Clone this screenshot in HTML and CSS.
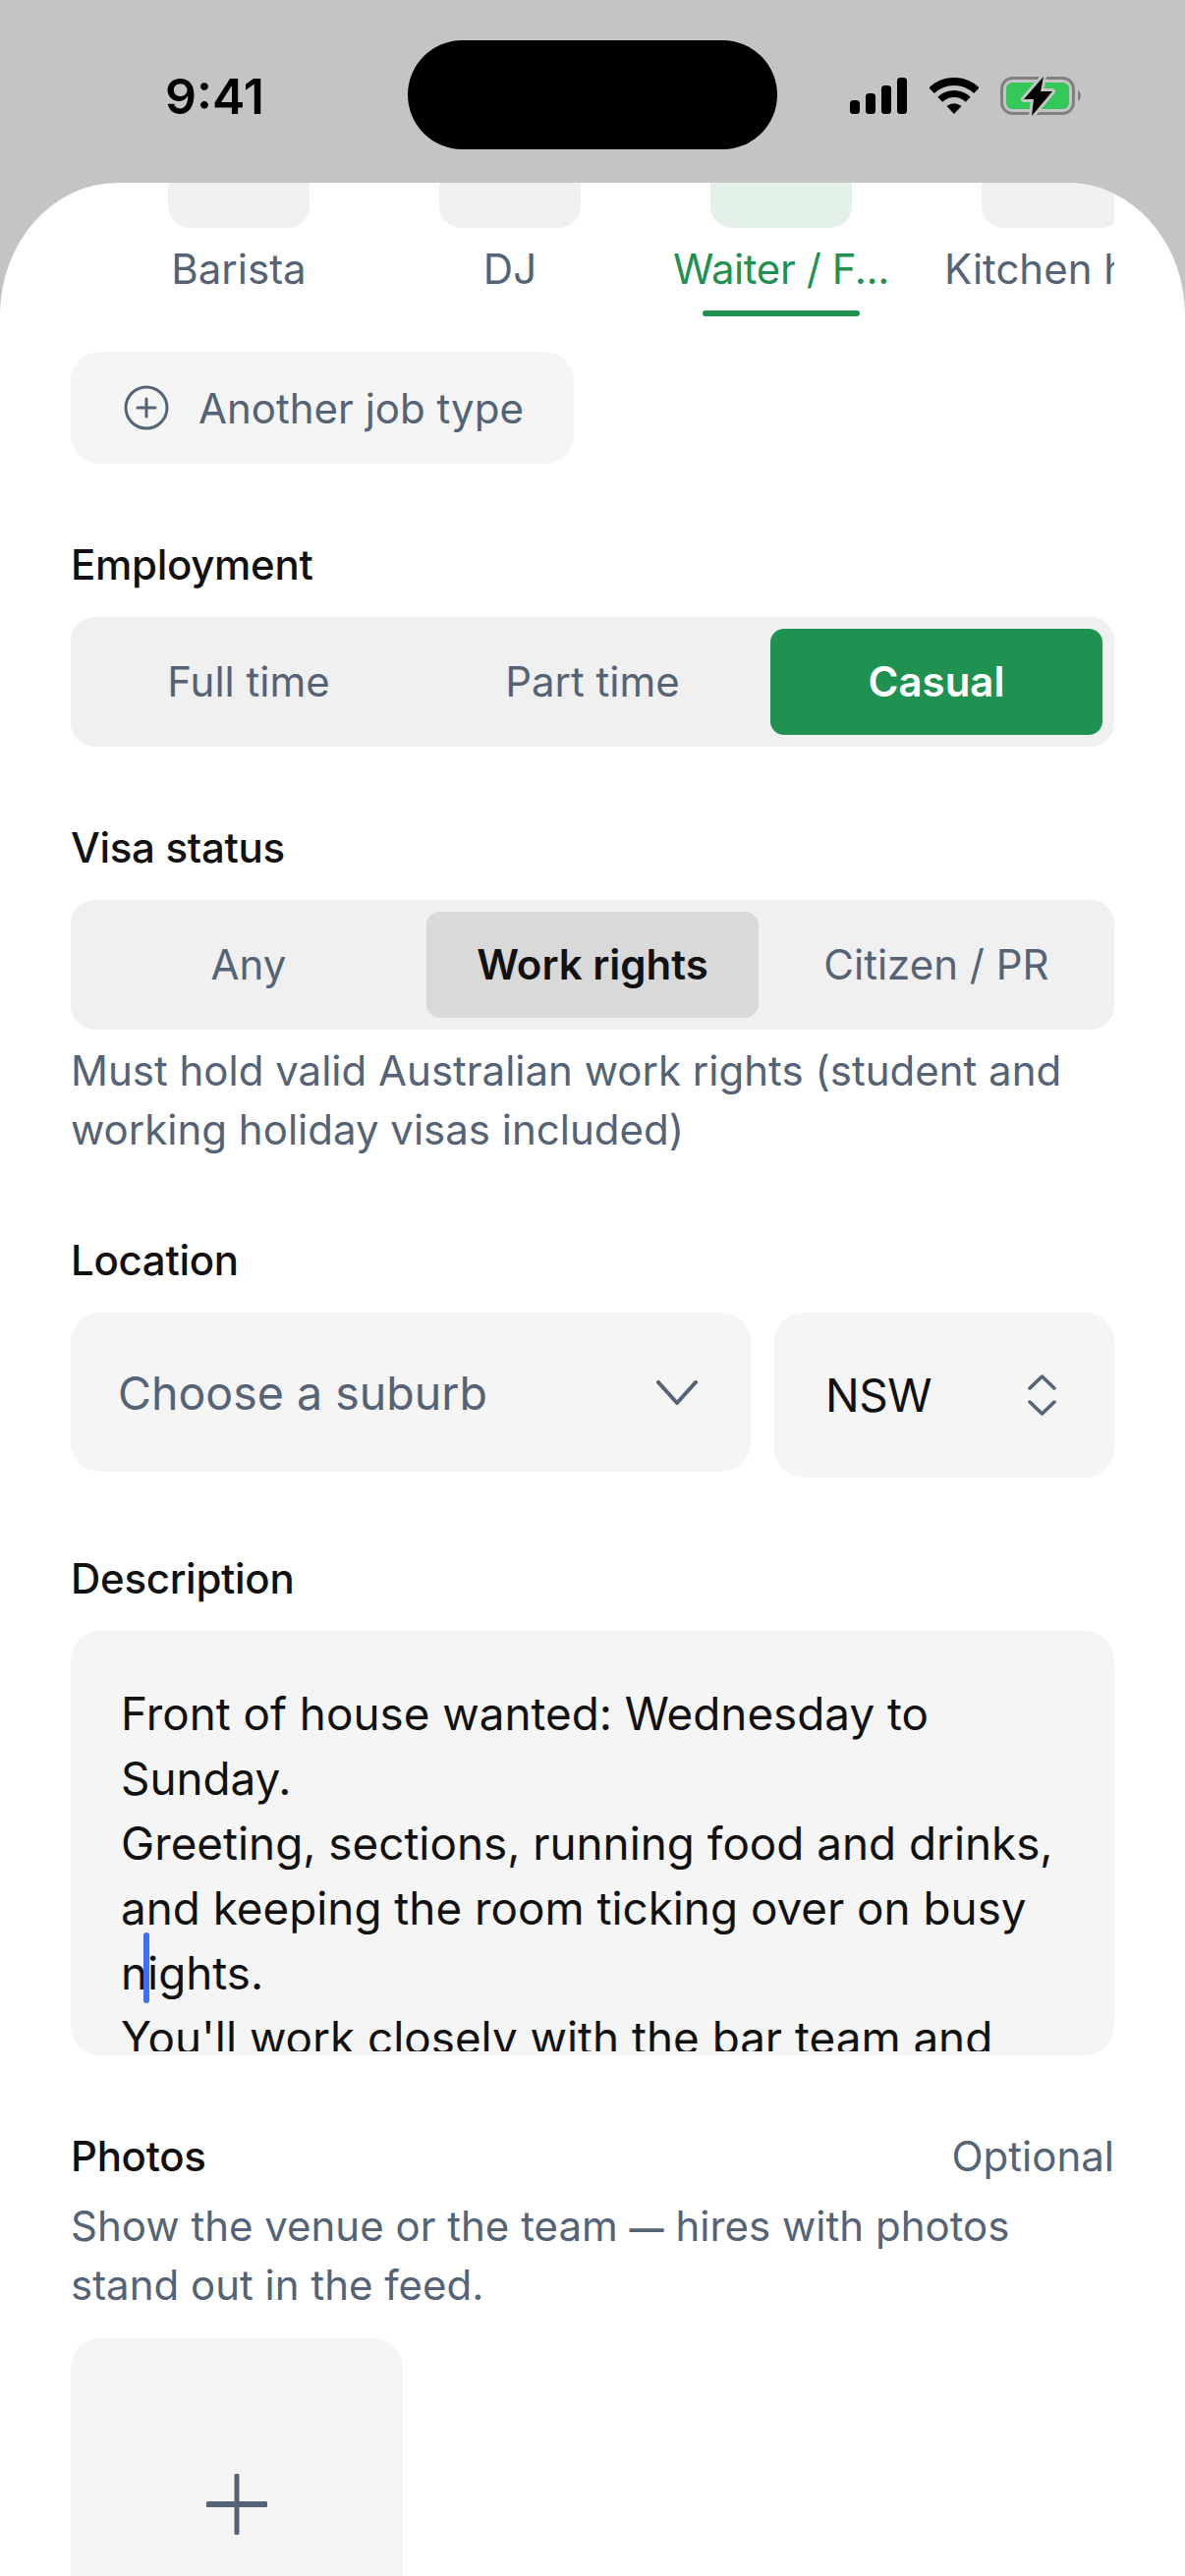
FILE: index.html
```html
<!DOCTYPE html>
<html lang="en">
<head>
    <meta charset="UTF-8">
    <meta name="viewport" content="width=device-width, initial-scale=1.0">
    <title>Post a job</title>
    <link rel="stylesheet" href="styles.css">
</head>
<body>

<div class="page">
    <!-- Status bar -->
    <div class="status-bar">
        <span class="status-time">9:41</span>
        <div class="island"></div>
        <svg class="status-signal" width="58" height="37" viewBox="0 0 58 37">
            <rect x="0" y="23" width="10" height="14" rx="3.5"/>
            <rect x="16" y="16" width="10" height="21" rx="3.5"/>
            <rect x="32" y="8" width="10" height="29" rx="3.5"/>
            <rect x="48" y="0" width="10" height="37" rx="3.5"/>
        </svg>
        <svg class="status-wifi" width="50" height="37" viewBox="0 0 50 37">
            <path d="M2.1 13.2A33 33 0 0 1 47.9 13.2" fill="none" stroke="#000" stroke-width="8"/>
            <path d="M10.8 22.2A20.5 20.5 0 0 1 39.2 22.2" fill="none" stroke="#000" stroke-width="7"/>
            <path d="M25 37L17.4 29.1Q25 23.5 32.6 29.1Z"/>
        </svg>
        <svg class="status-battery" width="82" height="40" viewBox="0 0 82 40">
            <rect x="1.5" y="1.5" width="73" height="36" rx="11" fill="none" stroke="#808080" stroke-width="3"/>
            <rect x="6" y="6" width="64" height="27" rx="6" fill="#34c759"/>
            <path d="M79 14Q82 16 82 19.5Q82 23 79 25Z" fill="#808080"/>
            <path d="M44 0L24 23H34L32 40L53 15H41Z" stroke="#c4c4c4" stroke-width="6" stroke-linejoin="round" fill="#c4c4c4"/>
            <path d="M44 0L24 23H34L32 40L53 15H41Z" fill="#000"/>
        </svg>
    </div>

    <div class="sheet">
        <!-- Job type tabs -->
        <div class="tabs">
            <div class="tab">
                <div class="tab-tile"></div>
                <div class="tab-name">Barista</div>
            </div>
            <div class="tab">
                <div class="tab-tile"></div>
                <div class="tab-name">DJ</div>
            </div>
            <div class="tab tab-active">
                <div class="tab-tile"></div>
                <div class="tab-name">Waiter / F...</div>
                <div class="tab-line"></div>
            </div>
            <div class="tab">
                <div class="tab-tile"></div>
                <div class="tab-name">Kitchen hand</div>
            </div>
        </div>

        <button type="button" class="add-type">
            <svg width="46" height="46" viewBox="0 0 46 46" fill="none" stroke="#546375" stroke-width="3" stroke-linecap="round">
                <circle cx="23" cy="23" r="21"/>
                <path d="M23 14V32M14 23H32"/>
            </svg>
            Another job type
        </button>

        <div class="section">
            <div class="field-label">Employment</div>
            <div class="segments">
                <div class="segment">Full time</div>
                <div class="segment">Part time</div>
                <div class="segment segment-green">Casual</div>
            </div>
        </div>

        <div class="section">
            <div class="field-label">Visa status</div>
            <div class="segments">
                <div class="segment">Any</div>
                <div class="segment segment-grey">Work rights</div>
                <div class="segment">Citizen / PR</div>
            </div>
            <p class="hint hint-visa">Must hold valid Australian work rights (student and working holiday visas included)</p>
        </div>

        <div class="section">
            <div class="field-label">Location</div>
            <div class="location-row">
                <div class="suburb-select">
                    <span>Choose a suburb</span>
                    <svg width="42" height="25" viewBox="0 0 42 25" fill="none" stroke="#546375" stroke-width="4" stroke-linecap="round" stroke-linejoin="round">
                        <path d="M2 2L21 23L40 2"/>
                    </svg>
                </div>
                <div class="state-select">
                    <span>NSW</span>
                    <svg width="29" height="42" viewBox="0 0 29 42" fill="none" stroke="#546375" stroke-width="3.5" stroke-linecap="round" stroke-linejoin="round">
                        <path d="M2 14L14.5 2L27 14M2 28L14.5 40L27 28"/>
                    </svg>
                </div>
            </div>
        </div>

        <div class="section">
            <div class="field-label">Description</div>
            <div class="description">
                <div class="description-text">
                    <div>Front of house wanted: Wednesday to Sunday.</div>
                    <div>Greeting, sections, running food and drinks, and keeping the room ticking over on busy nights.</div>
                    <div>You'll work closely with the bar team and</div>
                </div>
                <div class="caret"></div>
            </div>
        </div>

        <div class="section">
            <div class="label-row">
                <div class="field-label">Photos</div>
                <div class="optional">Optional</div>
            </div>
            <p class="hint hint-photos">Show the venue or the team <span class="dash">—</span> hires with photos <span class="hint-line">stand out in the feed.</span></p>
            <div class="photo-add">
                <svg width="62" height="62" viewBox="0 0 62 62" stroke="#546375" stroke-linecap="round">
                    <path d="M31 2V60" stroke-width="5"/>
                    <path d="M2 31H60" stroke-width="6"/>
                </svg>
            </div>
        </div>
    </div>
</div>

</body>
</html>
```

FILE: styles.css
```css
body {
    margin: 0;
    font-family: Inter, "Noto Sans", sans-serif;
    font-size: 42px;
    color: #111;
}
.page {
    height: 100vh;
    overflow: hidden;
    background-color: #c4c4c4;
    display: flex;
    flex-direction: column;
}

/* Status bar */
.status-bar {
    height: 186px;
    flex-shrink: 0;
    display: flex;
    align-items: flex-start;
    padding-left: 168px;
    box-sizing: border-box;
}
.status-time {
    width: 247px;
    margin-top: 68px;
    font-size: 50px;
    line-height: 60px;
    font-weight: 600;
    color: #000;
}
.island {
    width: 376px;
    height: 111px;
    margin-top: 41px;
    border-radius: 56px;
    background-color: #000;
}
.status-signal {
    margin: 79px 0 0 74px;
}
.status-wifi {
    margin: 79px 0 0 23px;
}
.status-battery {
    margin: 78px 0 0 22px;
}

/* Sheet */
.sheet {
    flex: 1;
    background-color: #fff;
    border-radius: 120px 120px 0 0 / 135px 135px 0 0;
    padding: 0 72px;
    overflow: hidden;
}

/* Tabs */
.tabs {
    display: flex;
    gap: 56px;
    padding-left: 61px;
    height: 136px;
    overflow: hidden;
}
.tab {
    width: 220px;
    flex-shrink: 0;
    display: flex;
    flex-direction: column;
    align-items: center;
}
.tab-tile {
    width: 144px;
    height: 46px;
    border-radius: 0 0 22px 22px;
    background-color: #f0f0f0;
}
.tab-name {
    width: 100%;
    margin-top: 17px;
    line-height: 50px;
    text-align: center;
    color: #546375;
    white-space: nowrap;
}
.tab-line {
    width: 160px;
    height: 6px;
    margin-top: 17px;
    border-radius: 3px;
    background-color: #1f9150;
}
.tab-active .tab-tile {
    background-color: #e3f1e8;
}
.tab-active .tab-name {
    color: #1f9150;
    letter-spacing: -0.4px;
}

/* Add another job type */
.add-type {
    display: flex;
    align-items: center;
    gap: 30px;
    height: 114px;
    margin-top: 36px;
    padding: 0 51px 0 54px;
    border: none;
    border-radius: 30px;
    background-color: #f5f5f5;
    font-family: inherit;
    font-size: 42px;
    color: #546375;
}

/* Sections */
.section {
    margin-top: 78px;
}
.field-label {
    line-height: 50px;
    font-weight: 500;
    letter-spacing: -0.3px;
    margin-bottom: 28px;
}
.label-row {
    display: flex;
    justify-content: space-between;
}
.optional {
    line-height: 50px;
    color: #546375;
}
.hint {
    margin: 0;
    line-height: 60px;
    color: #546375;
}
.hint-visa {
    margin-top: 12px;
}
.hint-photos {
    margin-top: -12px;
}
.hint-line {
    display: block;
}
.dash {
    font-size: 35px;
    line-height: 1;
    font-weight: 600;
}

/* Segmented controls */
.segments {
    display: grid;
    grid-template-columns: 1fr 1fr 1fr;
    gap: 12px;
    padding: 12px;
    border-radius: 24px;
    background-color: #f0f0f0;
}
.segment {
    height: 108px;
    line-height: 108px;
    text-align: center;
    border-radius: 14px;
    color: #546375;
}
.segment-green {
    background-color: #1f9150;
    color: #fff;
    font-weight: 600;
}
.segment-grey {
    background-color: #d9d9d9;
    color: #111;
    font-weight: 600;
}

/* Location */
.location-row {
    display: flex;
    align-items: flex-start;
    gap: 24px;
    font-size: 46px;
}
.suburb-select {
    flex: 1;
    height: 162px;
    padding: 1px 54px 0 48px;
    box-sizing: border-box;
    display: flex;
    align-items: center;
    justify-content: space-between;
    border-radius: 30px;
    background-color: #f5f5f5;
    color: #546375;
    font-size: 46.5px;
}
.state-select {
    width: 346px;
    height: 168px;
    padding: 0 59px 0 52px;
    box-sizing: border-box;
    display: flex;
    align-items: center;
    justify-content: space-between;
    border-radius: 30px;
    background-color: #f5f5f5;
    letter-spacing: -0.5px;
}

/* Description */
.description {
    position: relative;
    height: 432px;
    padding: 52px 52px 0 51px;
    box-sizing: border-box;
    border-radius: 30px;
    background-color: #f5f5f5;
}
.description-text {
    height: 376px;
    overflow: hidden;
    font-size: 45.8px;
    line-height: 66px;
}
.caret {
    position: absolute;
    left: 74px;
    top: 307px;
    width: 6px;
    height: 72px;
    border-radius: 3px;
    background-color: #3f6ff2;
}

/* Photos */
.photo-add {
    width: 338px;
    height: 338px;
    margin-top: 24px;
    display: flex;
    align-items: center;
    justify-content: center;
    border-radius: 30px;
    background-color: #f5f5f5;
}
```
